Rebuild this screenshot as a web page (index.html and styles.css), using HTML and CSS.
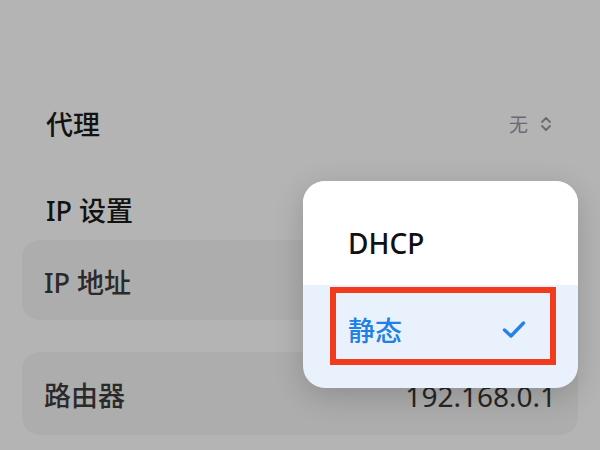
FILE: index.html
```html
<!DOCTYPE html>
<html lang="zh-CN">
<head>
<meta charset="utf-8">
<link rel="stylesheet" href="styles.css">
</head>
<body>
<div class="screen">
  <div class="settings">
    <div class="row">
      <span class="label">代理</span>
      <span class="value">无
        <svg class="updown" width="12" height="18" viewBox="0 0 12 18"><path d="M2 7 L6 3 L10 7 M2 11 L6 15 L10 11" fill="none" stroke="#6a6a72" stroke-width="1.8" stroke-linecap="round" stroke-linejoin="round"/></svg>
      </span>
    </div>
    <div class="row">
      <span class="label">IP 设置</span>
    </div>
    <div class="field">
      <span class="field-label">IP 地址</span>
    </div>
    <div class="field field-router">
      <span class="field-label">路由器</span>
      <span class="field-value">192.168.0.1</span>
    </div>
  </div>

  <div class="menu">
    <div class="menu-item">DHCP</div>
    <div class="menu-item selected">
      <span>静态</span>
      <svg class="check" width="24" height="19" viewBox="0 0 24 19"><path d="M2.5 10 L9 16 L21.5 3" fill="none" stroke="#2682e6" stroke-width="3.4" stroke-linecap="round" stroke-linejoin="round"/></svg>
    </div>
    <div class="highlight"></div>
  </div>
</div>
</body>
</html>
```
FILE: styles.css
```css
html, body {
  margin: 0;
  padding: 0;
}
body {
  width: 600px;
  height: 450px;
  overflow: hidden;
  background: #b4b4b4;
  font-family: "Noto Sans", "Noto Sans CJK SC", sans-serif;
}
.screen {
  position: relative;
  width: 600px;
  height: 450px;
}
.settings {
  display: flex;
  flex-direction: column;
  padding-top: 96px;
}
.row {
  height: 56px;
  padding: 0 46px;
  display: flex;
  align-items: center;
  justify-content: space-between;
}
.row + .row {
  margin-top: 30px;
  height: 56px;
}
.label {
  font-size: 27px;
  font-weight: 500;
  color: #121212;
  line-height: 1;
}
.value {
  display: flex;
  align-items: center;
  gap: 12px;
  font-size: 19px;
  color: #6a6a72;
  margin-right: 2px;
}
.field {
  margin: 2px 22px 0 22px;
  height: 80px;
  border-radius: 18px;
  background: #adadad;
  display: flex;
  align-items: center;
  justify-content: space-between;
  padding: 0 22px;
}
.field-router {
  margin-top: 32px;
  height: 83px;
}
.field-label {
  font-size: 27px;
  font-weight: 500;
  color: #2a2a2a;
  line-height: 1;
  margin-top: 4px;
}
.field-value {
  font-size: 28px;
  font-weight: 400;
  color: #262626;
  margin-top: 4px;
}
.menu {
  position: absolute;
  left: 303px;
  top: 181px;
  width: 275px;
  height: 207px;
  border-radius: 22px;
  background: #e9f2fc;
  overflow: hidden;
  box-shadow: 0 8px 30px rgba(0, 0, 0, 0.18);
  display: flex;
  flex-direction: column;
}
.menu-item {
  display: flex;
  align-items: center;
  justify-content: space-between;
  padding: 0 52px 0 45px;
  font-size: 27px;
  font-weight: 500;
}
.menu-item:first-child {
  height: 84px;
  padding-top: 20px;
  background: #ffffff;
  color: #111111;
  font-size: 28px;
}
.menu-item.selected {
  height: 88px;
  color: #2080e5;
}
.highlight {
  position: absolute;
  left: 27px;
  top: 106px;
  width: 226px;
  height: 78px;
  box-sizing: border-box;
  border: 6px solid #f23a1c;
}
```
